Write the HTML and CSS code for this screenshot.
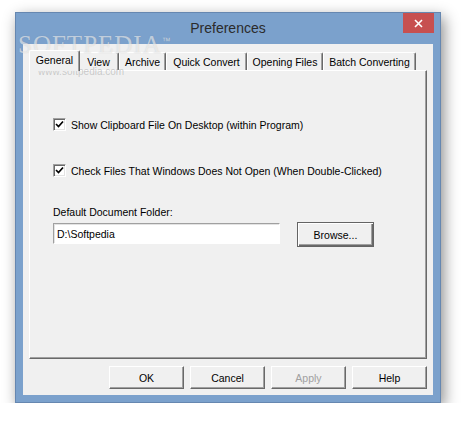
FILE: index.html
```html
<!DOCTYPE html>
<html lang="en">
<head>
    <meta charset="UTF-8">
    <title>Preferences</title>
    <link rel="stylesheet" href="styles.css">
</head>
<body>
    <div class="window">
        <div class="titlebar">
            <span></span>
            <span class="title">Preferences</span>
            <span class="close-btn">
                <svg width="9" height="9" viewBox="0 0 9 9"><path d="M1 1L8 8M8 1L1 8" stroke="#fff" stroke-width="1.6"/></svg>
            </span>
        </div>
        <div class="client">
            <div class="tabs">
                <div class="tab tab-general active">General</div>
                <div class="tab tab-view">View</div>
                <div class="tab tab-archive">Archive</div>
                <div class="tab tab-quick">Quick Convert</div>
                <div class="tab tab-opening">Opening Files</div>
                <div class="tab tab-batch">Batch Converting</div>
            </div>
            <div class="panel">
                <label class="check-row">
                    <span class="checkbox">
                        <svg width="9" height="9" viewBox="0 0 9 9"><path d="M1 4L3.5 6.5L8 1.5" fill="none" stroke="#000" stroke-width="1.7"/></svg>
                    </span>
                    Show Clipboard File On Desktop (within Program)
                </label>
                <label class="check-row row-second">
                    <span class="checkbox">
                        <svg width="9" height="9" viewBox="0 0 9 9"><path d="M1 4L3.5 6.5L8 1.5" fill="none" stroke="#000" stroke-width="1.7"/></svg>
                    </span>
                    Check Files That Windows Does Not Open (When Double-Clicked)
                </label>
                <div class="field-label">Default Document Folder:</div>
                <div class="folder-row">
                    <div class="text-input">D:\Softpedia</div>
                    <button class="btn btn-browse">Browse...</button>
                </div>
            </div>
            <div class="button-row">
                <button class="btn">OK</button>
                <button class="btn">Cancel</button>
                <button class="btn disabled">Apply</button>
                <button class="btn">Help</button>
            </div>
        </div>
        <div class="watermark">
            <div class="wm-big">SOFTPEDIA<sup>™</sup></div>
        </div>
        <div class="wm-small">www.softpedia.com</div>
    </div>
</body>
</html>
```

FILE: styles.css
```css
body {
    margin: 0;
    background-color: #fff;
    font-family: 'Liberation Sans', Arial, sans-serif;
    font-size: 10.5px;
    color: #000;
}
.window {
    position: relative;
    margin: 12px 0 0 15px;
    width: 424px;
    height: 389px;
    background-color: #7ba1cc;
    border: 1px solid #6687b0;
    box-shadow: 3px 5px 14px rgba(0,0,0,0.45);
}
.titlebar {
    display: grid;
    grid-template-columns: 1fr auto 1fr;
    align-items: start;
    height: 31px;
}
.title {
    font-size: 14px;
    color: #2b2b2b;
    margin-top: 7px;
}
.close-btn {
    justify-self: end;
    display: flex;
    justify-content: center;
    align-items: center;
    width: 31px;
    height: 20px;
    margin-right: 6px;
    background-color: #c75050;
}
.client {
    margin: 0 7px 7px;
    height: 339px;
    padding: 6px;
    background-color: #f0f0f0;
}
.tabs {
    display: flex;
    height: 20px;
    padding-left: 2px;
}
.tab {
    box-sizing: border-box;
    height: 18px;
    margin-top: 2px;
    padding-top: 3px;
    text-align: center;
    border-left: 1px solid #fff;
    border-top: 1px solid #fff;
    border-right: 1px solid #696969;
    box-shadow: inset -1px 0 #a0a0a0;
    border-radius: 2px 2px 0 0;
}
.tab.active {
    position: relative;
    height: 21px;
    margin: 0 -2px -1px -2px;
    padding-top: 3px;
    background-color: #f0f0f0;
    z-index: 1;
}
.tab-general { width: 51px; }
.tab-view { width: 41px; }
.tab-archive { width: 47px; }
.tab-quick { width: 81px; }
.tab-opening { width: 76px; }
.tab-batch { width: 93px; }
.panel {
    box-sizing: border-box;
    height: 289px;
    padding: 47px 0 0 23px;
    border-left: 1px solid #fff;
    border-top: 1px solid #fff;
    border-right: 1px solid #696969;
    border-bottom: 1px solid #696969;
    box-shadow: inset -1px -1px #a0a0a0;
}
.check-row {
    display: flex;
    align-items: center;
    gap: 5px;
    height: 13px;
}
.row-second {
    margin-top: 33px;
}
.checkbox {
    box-sizing: border-box;
    display: flex;
    justify-content: center;
    align-items: center;
    width: 13px;
    height: 13px;
    background-color: #fff;
    border-top: 1px solid #a0a0a0;
    border-left: 1px solid #a0a0a0;
    border-right: 1px solid #fff;
    border-bottom: 1px solid #fff;
    box-shadow: inset 1px 1px #696969, inset -1px -1px #e3e3e3;
}
.field-label {
    margin-top: 29px;
    height: 13px;
}
.folder-row {
    display: flex;
    align-items: flex-start;
    margin-top: 3px;
}
.text-input {
    box-sizing: border-box;
    width: 227px;
    height: 21px;
    margin-top: 1px;
    padding: 4px 3px;
    background-color: #fff;
    border-top: 1px solid #a0a0a0;
    border-left: 1px solid #a0a0a0;
    border-right: 1px solid #fff;
    border-bottom: 1px solid #fff;
    box-shadow: inset 1px 1px #e3e3e3;
}
.btn {
    box-sizing: border-box;
    width: 75px;
    height: 23px;
    padding: 0;
    font-family: inherit;
    font-size: 10.5px;
    color: #000;
    background-color: #f0f0f0;
    border-top: 1px solid #fff;
    border-left: 1px solid #fff;
    border-right: 1px solid #696969;
    border-bottom: 1px solid #696969;
    box-shadow: inset -1px -1px #a0a0a0;
}
.btn-browse {
    width: 77px;
    height: 25px;
    margin-left: 17px;
    border: 1px solid #646464;
    box-shadow: inset 1px 1px #fff, inset -1px -1px #696969, inset -2px -2px #a0a0a0;
}
.btn.disabled {
    color: #a0a0a0;
}
.button-row {
    display: flex;
    justify-content: flex-end;
    gap: 6px;
    margin-top: 7px;
}
.watermark {
    position: absolute;
    left: 2px;
    top: 19px;
    pointer-events: none;
}
.wm-big {
    font-family: 'Liberation Serif', serif;
    font-size: 25px;
    line-height: 19px;
    letter-spacing: 1px;
    color: rgba(255,255,255,0.55);
    text-shadow: 0 0 1px rgba(120,120,120,0.3);
}
.wm-big sup {
    font-size: 9px;
    font-family: 'Liberation Sans', sans-serif;
}
.wm-small {
    position: absolute;
    left: 22px;
    top: 54px;
    font-size: 10px;
    line-height: 9px;
    color: rgba(150,150,150,0.45);
    pointer-events: none;
}
```
